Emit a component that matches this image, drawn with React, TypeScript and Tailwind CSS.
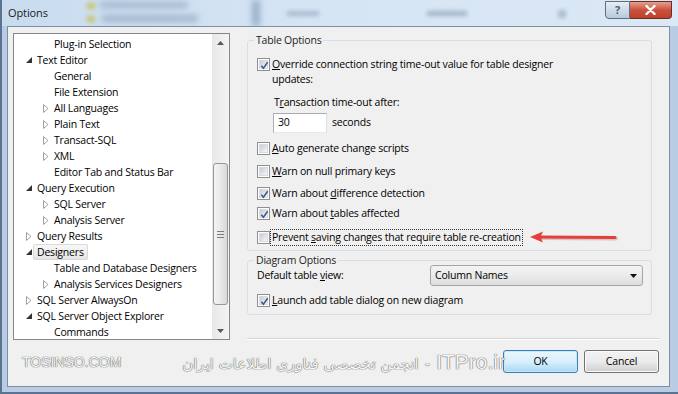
import React from "react";

type Arrow = "open" | "closed" | null;

const tree: { label: string; level: 1 | 2; arrow: Arrow; selected?: boolean }[] = [
  { label: "Plug-in Selection", level: 2, arrow: null },
  { label: "Text Editor", level: 1, arrow: "open" },
  { label: "General", level: 2, arrow: null },
  { label: "File Extension", level: 2, arrow: null },
  { label: "All Languages", level: 2, arrow: "closed" },
  { label: "Plain Text", level: 2, arrow: "closed" },
  { label: "Transact-SQL", level: 2, arrow: "closed" },
  { label: "XML", level: 2, arrow: "closed" },
  { label: "Editor Tab and Status Bar", level: 2, arrow: null },
  { label: "Query Execution", level: 1, arrow: "open" },
  { label: "SQL Server", level: 2, arrow: "closed" },
  { label: "Analysis Server", level: 2, arrow: "closed" },
  { label: "Query Results", level: 1, arrow: "closed" },
  { label: "Designers", level: 1, arrow: "open", selected: true },
  { label: "Table and Database Designers", level: 2, arrow: null },
  { label: "Analysis Services Designers", level: 2, arrow: "closed" },
  { label: "SQL Server AlwaysOn", level: 1, arrow: "closed" },
  { label: "SQL Server Object Explorer", level: 1, arrow: "open" },
  { label: "Commands", level: 2, arrow: null },
];

function TreeArrow({ kind }: { kind: Arrow }) {
  if (kind === "open")
    return (
      <svg width="6" height="6" viewBox="0 0 6 6">
        <polygon points="6,0 6,6 0,6" fill="#333" />
      </svg>
    );
  if (kind === "closed")
    return (
      <svg width="6" height="9" viewBox="0 0 6 9">
        <polygon points="0.5,0.5 5,4.5 0.5,8.5" fill="#fff" stroke="#a0a0a0" strokeWidth="1" />
      </svg>
    );
  return null;
}

function Check({ checked }: { checked?: boolean }) {
  return (
    <span className="relative w-[13px] h-[13px] shrink-0 border border-[#8e8f8f] bg-white flex items-center justify-center">
      <span className="w-[9px] h-[9px] bg-linear-to-br from-[#c8ccd3] to-[#f6f6f6] border border-[#d8dce2]" />
      {checked && (
        <svg className="absolute left-[1px] top-[1px]" width="11" height="11" viewBox="0 0 11 11">
          <path d="M2.3 5.7 L4.4 8.2 L8.7 2.3" fill="none" stroke="#3a5791" strokeWidth="1.5" />
        </svg>
      )}
    </span>
  );
}

function CheckRow({
  checked,
  mt,
  children,
}: {
  checked?: boolean;
  mt: string;
  children: React.ReactNode;
}) {
  return (
    <div className={`flex items-center h-[16px] pl-[9px] ${mt}`}>
      <Check checked={checked} />
      <span className="px-[1px] leading-[15px] border border-transparent">{children}</span>
    </div>
  );
}

function TitleBar() {
  return (
    <div className="relative h-[26px] shrink-0 flex justify-between bg-linear-to-r from-[#c9dcef] via-[#d6e5f4] to-[#dbe8f6] overflow-hidden">
      {/* blurred desktop behind the glass */}
      <div className="absolute left-[98px] top-[2px] w-[88px] h-[6px] bg-[#8fa3bb] blur-[3px] opacity-70" />
      <div className="absolute left-[100px] top-[15px] w-[96px] h-[7px] bg-[#8fa3bb] blur-[3px] opacity-70" />
      <div className="absolute left-[85px] top-[3px] w-[8px] h-[6px] bg-[#c7c56a] blur-[2px]" />
      <div className="absolute left-[85px] top-[16px] w-[8px] h-[6px] bg-[#c7c56a] blur-[2px]" />
      <div className="absolute left-[250px] top-0 w-[8px] h-[26px] bg-[#7f98b8] blur-[3px] opacity-70" />
      <div className="absolute left-[285px] top-[11px] w-[32px] h-[5px] bg-[#8da0b6] blur-[2px] opacity-60" />
      <div className="absolute left-[425px] top-[11px] w-[40px] h-[5px] bg-[#7f93aa] blur-[2px] opacity-60" />
      <div className="absolute left-[556px] top-[10px] w-[8px] h-[8px] bg-[#8da0b6] blur-[2px] opacity-60" />
      <span className="relative ml-[6px] self-center text-[11px] tracking-[-0.1px] text-[#1b1b1b]">Options</span>
      <div className="relative flex mr-[6px] mt-[1px] h-[18px]">
        <div className="w-[25px] border border-[#5f6e80] rounded-bl-[4px] bg-linear-to-b from-[#e6eef7] to-[#b9c9dc] flex items-center justify-center text-[11px] font-bold text-[#4e5a69]">
          ?
        </div>
        <div className="w-[42px] border border-l-0 border-[#6b2c24] rounded-br-[4px] bg-linear-to-b from-[#e4a090] via-[#c9513d] to-[#c1402a] flex items-center justify-center">
          <svg width="11" height="10" viewBox="0 0 11 10">
            <path d="M1.5 1 L9.5 9 M9.5 1 L1.5 9" stroke="#fff" strokeWidth="2.4" strokeLinecap="round" />
          </svg>
        </div>
      </div>
    </div>
  );
}

export default function App() {
  return (
    <div className="relative w-[678px] h-[394px] overflow-hidden flex flex-col bg-[#b8cde3] border-l-[2px] border-b-[2px] border-[#5b7291] font-['Open_Sans',sans-serif] text-[10.5px] tracking-[-0.2px] text-black">
      <TitleBar />

      <div className="ml-[5px] mr-[8px] mb-[5px] flex-1 flex flex-col bg-[#f0f0f0] border border-[#7d8ea5]">
        <div className="flex pt-[6px]">
          {/* tree */}
          <div className="ml-[5px] w-[217px] h-[307px] border border-[#828790] bg-white flex overflow-hidden">
            <div className="flex-1 pt-[2px] overflow-hidden">
              {tree.map((t) => (
                <div key={t.label} className="flex items-center h-[16px] whitespace-nowrap">
                  <span className={t.level === 1 ? "w-[6px] shrink-0" : "w-[23px] shrink-0"} />
                  <span className="w-[17px] shrink-0 flex items-center justify-center">
                    <TreeArrow kind={t.arrow} />
                  </span>
                  <span
                    className={`-ml-[4px] px-[3px] leading-[14px] border rounded-[2px] ${
                      t.selected
                        ? "bg-linear-to-b from-[#f8f8f8] to-[#e5e5e5] border-[#d9d9d9]"
                        : "border-transparent"
                    }`}
                  >
                    {t.label}
                  </span>
                </div>
              ))}
            </div>
            {/* scrollbar */}
            <div className="w-[17px] shrink-0 bg-linear-to-r from-[#e8e8e8] to-[#f4f4f4] flex flex-col">
              <div className="h-[17px] flex items-center justify-center">
                <svg width="7" height="4" viewBox="0 0 7 4">
                  <polygon points="0,4 3.5,0 7,4" fill="#555" />
                </svg>
              </div>
              <div className="flex-1 flex flex-col">
                <div className="mt-[112px] mx-[1px] h-[142px] rounded-[3px] border border-[#979797] bg-linear-to-r from-[#f4f4f4] via-[#e9e9e9] to-[#d8d8d8] flex flex-col items-center justify-center gap-[2px]">
                  <span className="w-[7px] h-[1px] bg-[#7c7c7c]" />
                  <span className="w-[7px] h-[1px] bg-[#7c7c7c]" />
                  <span className="w-[7px] h-[1px] bg-[#7c7c7c]" />
                </div>
              </div>
              <div className="h-[17px] flex items-center justify-center">
                <svg width="7" height="4" viewBox="0 0 7 4">
                  <polygon points="0,0 3.5,4 7,0" fill="#555" />
                </svg>
              </div>
            </div>
          </div>

          {/* right panel */}
          <div className="ml-[17px] w-[412px] flex flex-col">
            <fieldset className="w-[405px] h-[218px] border border-[#d5dfe5] rounded-[3px] flex flex-col">
              <legend className="ml-[6px] px-[2px] leading-[15px] text-[#1e1e1e]">Table Options</legend>
              <div className="flex items-start pl-[9px] mt-[9px]">
                <span className="mt-[1px]">
                  <Check checked />
                </span>
                <span className="ml-[1px] px-[1px] leading-[15px]">
                  <u>O</u>verride connection string time-out value for table designer
                  <br />
                  updates:
                </span>
              </div>
              <div className="pl-[26px] mt-[8px] leading-[15px]">
                T<u>r</u>ansaction time-out after:
              </div>
              <div className="flex items-center pl-[25px] mt-[3px]">
                <div className="w-[54px] h-[20px] border border-[#abadb3] border-b-[#e3e9ef] border-r-[#dbdfe6] bg-white pl-[4px] flex items-center">
                  30
                </div>
                <span className="ml-[5px]">seconds</span>
              </div>
              <CheckRow mt="mt-[7px]">
                <u>A</u>uto generate change scripts
              </CheckRow>
              <CheckRow mt="mt-[7px]">
                <u>W</u>arn on null primary keys
              </CheckRow>
              <CheckRow mt="mt-[6px]" checked>
                Warn about <u>d</u>ifference detection
              </CheckRow>
              <CheckRow mt="mt-[4px]" checked>
                Warn about <u>t</u>ables affected
              </CheckRow>
              <div className="flex items-center h-[16px] pl-[9px] mt-[8px]">
                <Check />
                <span className="px-[1px] leading-[15px] border border-dotted border-[#333]">
                  Prevent <u>s</u>aving changes that require table re-creation
                </span>
                <svg className="ml-[7px]" width="88" height="14" viewBox="0 0 88 14">
                  <path d="M9 7 L85 7.5" stroke="#9a3a36" strokeOpacity="0.25" strokeWidth="4" strokeLinecap="round" transform="translate(1 1)" />
                  <path d="M9 7 L85 7.5" stroke="#e3403a" strokeWidth="3" strokeLinecap="round" />
                  <polygon points="0,7 13,1.5 10.5,7 13,12.5" fill="#e3403a" />
                </svg>
              </div>
            </fieldset>

            <fieldset className="mt-[3px] w-[405px] h-[61px] border border-[#d5dfe5] rounded-[3px] flex flex-col">
              <legend className="ml-[6px] px-[2px] leading-[12px] text-[#1e1e1e]">Diagram Options</legend>
              <div className="flex items-center h-[21px] -mt-[1px] pl-[9px]">
                <span className="w-[173px] leading-[13px]">
                  Default table <u>v</u>iew:
                </span>
                <div className="w-[213px] h-[21px] border border-[#a5a5a5] rounded-[3px] bg-linear-to-b from-[#f3f3f3] via-[#ebebeb] to-[#dddddd] flex items-center justify-between pl-[4px] pr-[5px]">
                  <span>Column Names</span>
                  <svg width="7" height="4" viewBox="0 0 7 4">
                    <polygon points="0,0 7,0 3.5,4" fill="#111" />
                  </svg>
                </div>
              </div>
              <CheckRow mt="mt-[6px]" checked>
                <u>L</u>aunch add table dialog on new diagram
              </CheckRow>
            </fieldset>

            <div className="mt-[23px] h-[1px] bg-[#d4d4d4] border-b border-white box-content" />
          </div>
        </div>

        {/* buttons */}
        <div className="mt-[10px] flex justify-end gap-[6px] pr-[10px]">
          <button className="w-[75px] h-[23px] rounded-[3px] border border-[#3c7fb1] bg-linear-to-b from-[#eaf6fd] via-[#d9f0fc] to-[#a7d9f5] shadow-[inset_0_0_0_1px_#c6e7f9]">
            OK
          </button>
          <button className="w-[75px] h-[23px] rounded-[3px] border border-[#707070] bg-linear-to-b from-[#f2f2f2] via-[#ebebeb] to-[#cfcfcf] shadow-[inset_0_0_0_1px_#fbfbfb]">
            Cancel
          </button>
        </div>
      </div>

      {/* watermark overlay */}
      <div className="absolute left-[20px] top-[352px] font-['Liberation_Sans',sans-serif] text-[14px] tracking-normal text-[#f6f6f6] [text-shadow:0_0_1px_#555,0_0_1px_#555]">
        TOSINSO.COM
      </div>
      <div
        dir="rtl"
        className="absolute right-[173px] top-[346px] flex items-baseline font-['DejaVu_Sans',sans-serif] text-[15px] tracking-normal text-[#f6f6f6] [text-shadow:0_0_1px_#555,0_0_1px_#555] whitespace-nowrap"
      >
        <span className="font-['Liberation_Sans',sans-serif] text-[21px]">ITPro.ir</span>
        <span className="mx-[6px]">-</span>
        <span>انجمن تخصصی فناوری اطلاعات ایران</span>
      </div>
    </div>
  );
}
